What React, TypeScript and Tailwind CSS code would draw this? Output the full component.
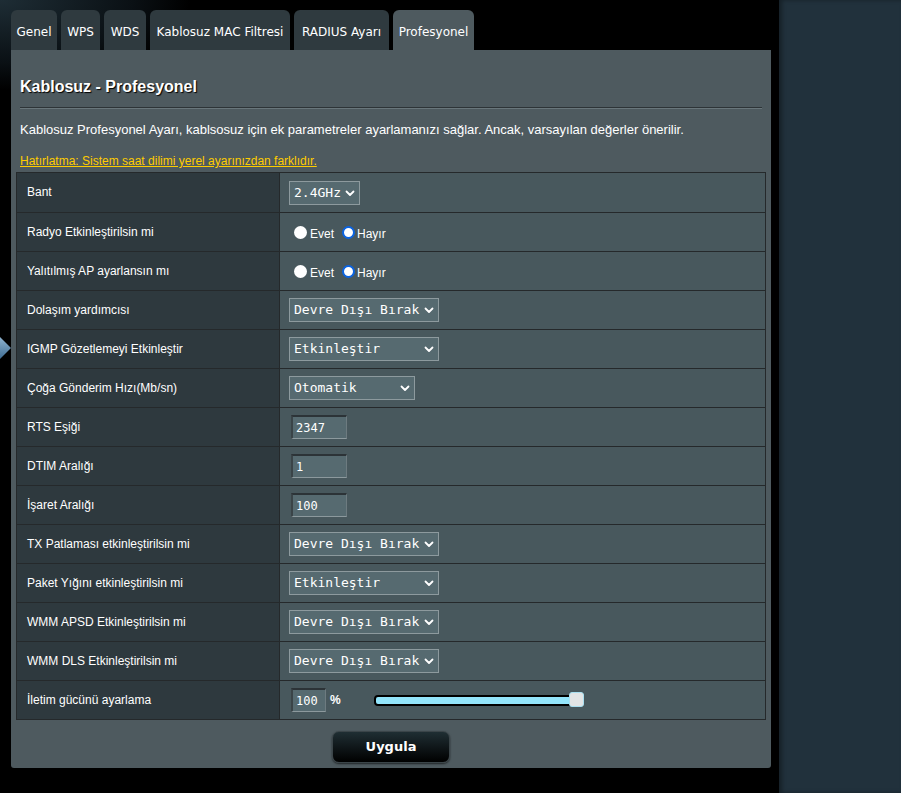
import React from "react";

const Chevron = () => (
  <svg width="10" height="10" viewBox="0 0 10 10" className="shrink-0">
    <path d="M1.5 3.5 L5 7 L8.5 3.5" fill="none" stroke="#ffffff" strokeWidth="1.8" strokeLinecap="round" strokeLinejoin="round" />
  </svg>
);

function Sel({ text, w }: { text: string; w: string }) {
  return (
    <div
      className={`${w} h-[24px] flex items-center justify-between pl-[4px] pr-[4px] bg-[#566a70] border border-[#8d9a9e] text-white text-[13px]`}
      style={{ fontFamily: '"DejaVu Sans Mono", "Liberation Mono", monospace' }}
    >
      <span className="whitespace-pre">{text}</span>
      <Chevron />
    </div>
  );
}

function TextIn({ v, w = "w-[56px]" }: { v: string; w?: string }) {
  return (
    <div
      className={`${w} h-[24px] flex items-center pl-[3px] bg-[#566a70] border-t-2 border-l-2 border-t-[#2c3337] border-l-[#3a4448] border-b border-r border-b-[#8c999d] border-r-[#6d7b80] text-white text-[12px]`}
      style={{ fontFamily: '"DejaVu Sans Mono", "Liberation Mono", monospace' }}
    >
      {v}
    </div>
  );
}

function Radio({ checked }: { checked?: boolean }) {
  return checked ? (
    <span className="w-[13px] h-[13px] rounded-full border-[2px] border-[#0b63e0] bg-white shrink-0" />
  ) : (
    <span className="w-[13px] h-[13px] rounded-full bg-white shrink-0" />
  );
}

function Radios() {
  return (
    <div className="flex items-center text-white text-[12px] ml-[5px]">
      <Radio />
      <span className="ml-[3px] mt-[3px]">Evet</span>
      <span className="ml-[8px] flex"><Radio checked /></span>
      <span className="ml-[2px] mt-[3px]">Hayır</span>
    </div>
  );
}

const rows: { label: string; ctrl: React.ReactNode }[] = [
  { label: "Bant", ctrl: <Sel text="2.4GHz" w="w-[71px]" /> },
  { label: "Radyo Etkinleştirilsin mi", ctrl: <Radios /> },
  { label: "Yalıtılmış AP ayarlansın mı", ctrl: <Radios /> },
  { label: "Dolaşım yardımcısı", ctrl: <Sel text="Devre Dışı Bırak" w="w-[150px]" /> },
  { label: "IGMP Gözetlemeyi Etkinleştir", ctrl: <Sel text="Etkinleştir" w="w-[150px]" /> },
  { label: "Çoğa Gönderim Hızı(Mb/sn)", ctrl: <Sel text="Otomatik" w="w-[126px]" /> },
  { label: "RTS Eşiği", ctrl: <div className="pl-[2px]"><TextIn v="2347" /></div> },
  { label: "DTIM Aralığı", ctrl: <div className="pl-[2px]"><TextIn v="1" /></div> },
  { label: "İşaret Aralığı", ctrl: <div className="pl-[2px]"><TextIn v="100" /></div> },
  { label: "TX Patlaması etkinleştirilsin mi", ctrl: <Sel text="Devre Dışı Bırak" w="w-[150px]" /> },
  { label: "Paket Yığını etkinleştirilsin mi", ctrl: <Sel text="Etkinleştir" w="w-[150px]" /> },
  { label: "WMM APSD Etkinleştirilsin mi", ctrl: <Sel text="Devre Dışı Bırak" w="w-[150px]" /> },
  { label: "WMM DLS Etkinleştirilsin mi", ctrl: <Sel text="Devre Dışı Bırak" w="w-[150px]" /> },
  {
    label: "İletim gücünü ayarlama",
    ctrl: (
      <div className="flex items-center pl-[2px]">
        <TextIn v="100" w="w-[35px]" />
        <span className="ml-[4px] text-white text-[12px] font-bold" style={{ fontFamily: '"Liberation Sans", Arial, sans-serif' }}>%</span>
        <div className="ml-[33px] relative w-[210px] h-[16px] flex items-center">
          <div className="w-[208px] h-[11px] rounded-[4px] border-2 border-black bg-[#93e5fb]" />
          <div className="absolute right-0 top-[0px] w-[15px] h-[15px] rounded-[3px] bg-[#e2e4e5] border border-[#a9dff0]" />
        </div>
      </div>
    ),
  },
];

const tabs = [
  { t: "Genel", w: "w-[46px]" },
  { t: "WPS", w: "w-[39px]" },
  { t: "WDS", w: "w-[42px]" },
  { t: "Kablosuz MAC Filtresi", w: "w-[140px]" },
  { t: "RADIUS Ayarı", w: "w-[95px]" },
];

export default function App() {
  return (
    <div
      className="w-[901px] h-[793px] bg-black flex overflow-hidden"
      style={{ fontFamily: '"Liberation Sans", Arial, sans-serif' }}
    >
      <div className="w-[779px] h-full relative bg-[radial-gradient(ellipse_190px_90px_at_0px_0px,#1e2d35_0%,#0a1014_70%,#000_100%)]">
        <svg className="absolute left-0 top-[337px]" width="11" height="22" viewBox="0 0 11 22">
          <defs>
            <linearGradient id="ag" x1="0" y1="0" x2="0" y2="1">
              <stop offset="0" stopColor="#8fb3cf" />
              <stop offset="1" stopColor="#3f6d93" />
            </linearGradient>
          </defs>
          <path d="M0 0 L11 11 L0 22 Z" fill="url(#ag)" />
        </svg>
        <div className="pl-[11px] pt-[10px]">
          <div
            className="flex gap-[4px] h-[40px]"
            style={{ fontFamily: '"DejaVu Sans", Verdana, sans-serif' }}
          >
            {tabs.map((t) => (
              <div
                key={t.t}
                className={`${t.w} h-[40px] pt-[3px] rounded-t-[6px] bg-[#2f3a3f] text-white text-[12px] flex items-center justify-center whitespace-nowrap`}
              >
                {t.t}
              </div>
            ))}
            <div className="w-[81px] h-[40px] pt-[3px] rounded-t-[6px] bg-[#4e5a5f] text-white text-[12px] flex items-center justify-center whitespace-nowrap">
              Profesyonel
            </div>
          </div>
          <div className="w-[760px] h-[718px] bg-[#4e5a5f] rounded-b-[3px] flex flex-col">
            <div
              className="ml-[9px] mt-[27px] h-[20px] leading-[20px] text-white text-[16px] font-bold"
              style={{ textShadow: "1px 1px 1px #000" }}
            >
              Kablosuz - Profesyonel
            </div>
            <div className="mx-[9px] mt-[10px] h-[2px] border-t border-t-[#2d3437] border-b border-b-[#69767b]" />
            <div className="ml-[9px] mt-[13px] h-[16px] leading-[16px] text-white text-[13px]">
              Kablosuz Profesyonel Ayarı, kablsosuz için ek parametreler ayarlamanızı sağlar. Ancak, varsayılan değerler önerilir.
            </div>
            <div className="ml-[9px] mt-[16px] h-[15px] leading-[15px] text-[#ffcc00] text-[12px] underline">
              Hatırlatma: Sistem saat dilimi yerel ayarınızdan farklıdır.
            </div>
            <div className="ml-[5px] mt-[3px] w-[750px] border border-[#25292b] flex flex-col">
              {rows.map((r, i) => (
                <div
                  key={i}
                  className={`flex h-[39px] ${i === 0 ? "h-[38px]" : "border-t border-t-[#25292b]"}`}
                >
                  <div className="w-[263px] shrink-0 bg-[#2e393e] border-r border-r-[#25292b] flex items-center pl-[10px] pb-[1px] text-white text-[12px]">
                    {r.label}
                  </div>
                  <div className="flex-1 bg-[#48585d] flex items-center pl-[9px]">{r.ctrl}</div>
                </div>
              ))}
            </div>
            <div className="flex mt-[11px] ml-[321px]">
              <div
                className="w-[118px] h-[32px] rounded-[7px] bg-[linear-gradient(#1f2e33,#000)] border border-[#3b4549] flex items-center justify-center text-white text-[13px] font-bold shadow-[0_1px_2px_rgba(0,0,0,0.6)]"
                style={{ fontFamily: '"DejaVu Sans", Verdana, sans-serif' }}
              >
                Uygula
              </div>
            </div>
          </div>
        </div>
      </div>
      <div className="flex-1 h-full bg-[#21313c] shadow-[inset_3px_0_4px_rgba(0,0,0,0.35)]" />
    </div>
  );
}
